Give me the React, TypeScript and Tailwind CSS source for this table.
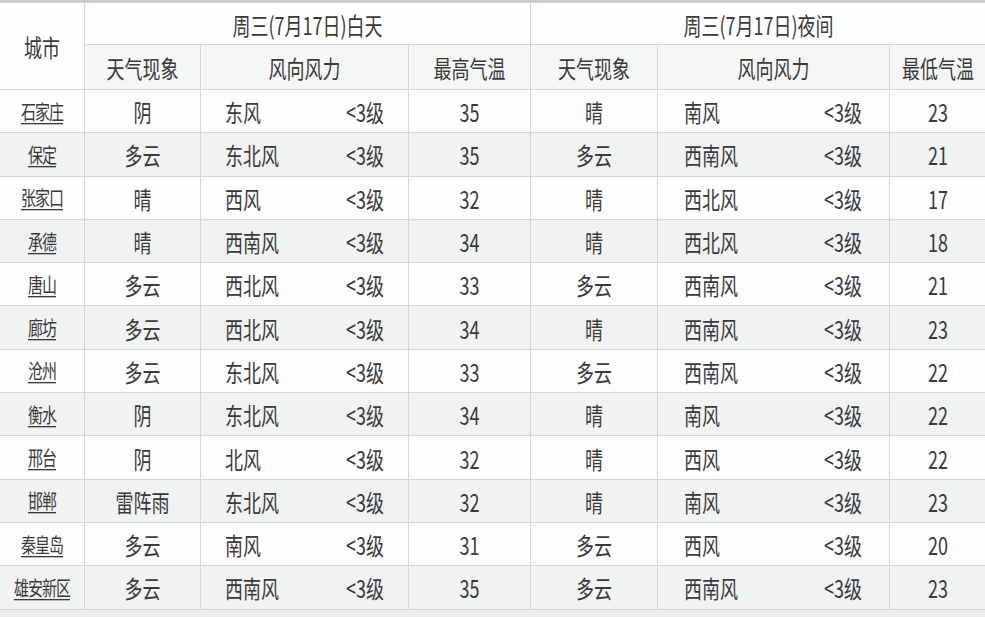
import React from "react";

type Row = {
  city: string;
  dw: string;
  dd: string;
  hi: string;
  nw: string;
  nd: string;
  lo: string;
};

const rows: Row[] = [
  { city: "石家庄", dw: "阴", dd: "东风", hi: "35", nw: "晴", nd: "南风", lo: "23" },
  { city: "保定", dw: "多云", dd: "东北风", hi: "35", nw: "多云", nd: "西南风", lo: "21" },
  { city: "张家口", dw: "晴", dd: "西风", hi: "32", nw: "晴", nd: "西北风", lo: "17" },
  { city: "承德", dw: "晴", dd: "西南风", hi: "34", nw: "晴", nd: "西北风", lo: "18" },
  { city: "唐山", dw: "多云", dd: "西北风", hi: "33", nw: "多云", nd: "西南风", lo: "21" },
  { city: "廊坊", dw: "多云", dd: "西北风", hi: "34", nw: "晴", nd: "西南风", lo: "23" },
  { city: "沧州", dw: "多云", dd: "东北风", hi: "33", nw: "多云", nd: "西南风", lo: "22" },
  { city: "衡水", dw: "阴", dd: "东北风", hi: "34", nw: "晴", nd: "南风", lo: "22" },
  { city: "邢台", dw: "阴", dd: "北风", hi: "32", nw: "晴", nd: "西风", lo: "22" },
  { city: "邯郸", dw: "雷阵雨", dd: "东北风", hi: "32", nw: "晴", nd: "南风", lo: "23" },
  { city: "秦皇岛", dw: "多云", dd: "南风", hi: "31", nw: "多云", nd: "西风", lo: "20" },
  { city: "雄安新区", dw: "多云", dd: "西南风", hi: "35", nw: "多云", nd: "西南风", lo: "23" },
];

function T({ children, className = "" }: { children: React.ReactNode; className?: string }) {
  return <span className={"inline-block scale-y-[1.35] " + className}>{children}</span>;
}

export default function App() {
  const cell = "border border-[#d4d6d8] text-center align-middle p-0";
  return (
    <div
      className="w-[985px] h-[617px] overflow-hidden bg-[#eceef0] text-[#3a3a3a] text-[18px] leading-none"
      style={{ fontFamily: '"Noto Sans CJK SC", "Noto Sans", sans-serif' }}
    >
      <div className="h-[2px] bg-[#c6cbd0]" />
      <table className="border-collapse table-fixed w-[987px] -ml-px">
        <colgroup>
          <col className="w-[85px]" />
          <col className="w-[116px]" />
          <col className="w-[208px]" />
          <col className="w-[122px]" />
          <col className="w-[127px]" />
          <col className="w-[232px]" />
          <col className="w-[97px]" />
        </colgroup>
        <thead>
          <tr className="h-[42px] bg-[#fdfefe]">
            <th rowSpan={2} className={cell + " font-normal"}>
              <T>城市</T>
            </th>
            <th colSpan={3} className={cell + " font-normal"}>
              <T>周三(7月17日)白天</T>
            </th>
            <th colSpan={3} className={cell + " font-normal"}>
              <T>周三(7月17日)夜间</T>
            </th>
          </tr>
          <tr className="h-[45px] bg-[#f5f6f6]">
            <th className={cell + " font-normal"}><T>天气现象</T></th>
            <th className={cell + " font-normal"}><T>风向风力</T></th>
            <th className={cell + " font-normal"}><T>最高气温</T></th>
            <th className={cell + " font-normal"}><T>天气现象</T></th>
            <th className={cell + " font-normal"}><T>风向风力</T></th>
            <th className={cell + " font-normal"}><T>最低气温</T></th>
          </tr>
        </thead>
        <tbody>
          {rows.map((r, i) => (
            <tr key={r.city} className={"h-[43.3px] " + (i % 2 === 0 ? "bg-[#fdfdfd]" : "bg-[#f1f2f2]")}>
              <td className={cell + " text-[15px] tracking-[-1px]"}>
                <T className="underline underline-offset-2 decoration-1">{r.city}</T>
              </td>
              <td className={cell}><T>{r.dw}</T></td>
              <td className={cell}>
                <div className="flex justify-between pl-[24px] pr-[24px]">
                  <T>{r.dd}</T>
                  <T>&lt;3级</T>
                </div>
              </td>
              <td className={cell}><T>{r.hi}</T></td>
              <td className={cell}><T>{r.nw}</T></td>
              <td className={cell}>
                <div className="flex justify-between pl-[26px] pr-[27px]">
                  <T>{r.nd}</T>
                  <T>&lt;3级</T>
                </div>
              </td>
              <td className={cell}><T>{r.lo}</T></td>
            </tr>
          ))}
        </tbody>
      </table>
    </div>
  );
}
